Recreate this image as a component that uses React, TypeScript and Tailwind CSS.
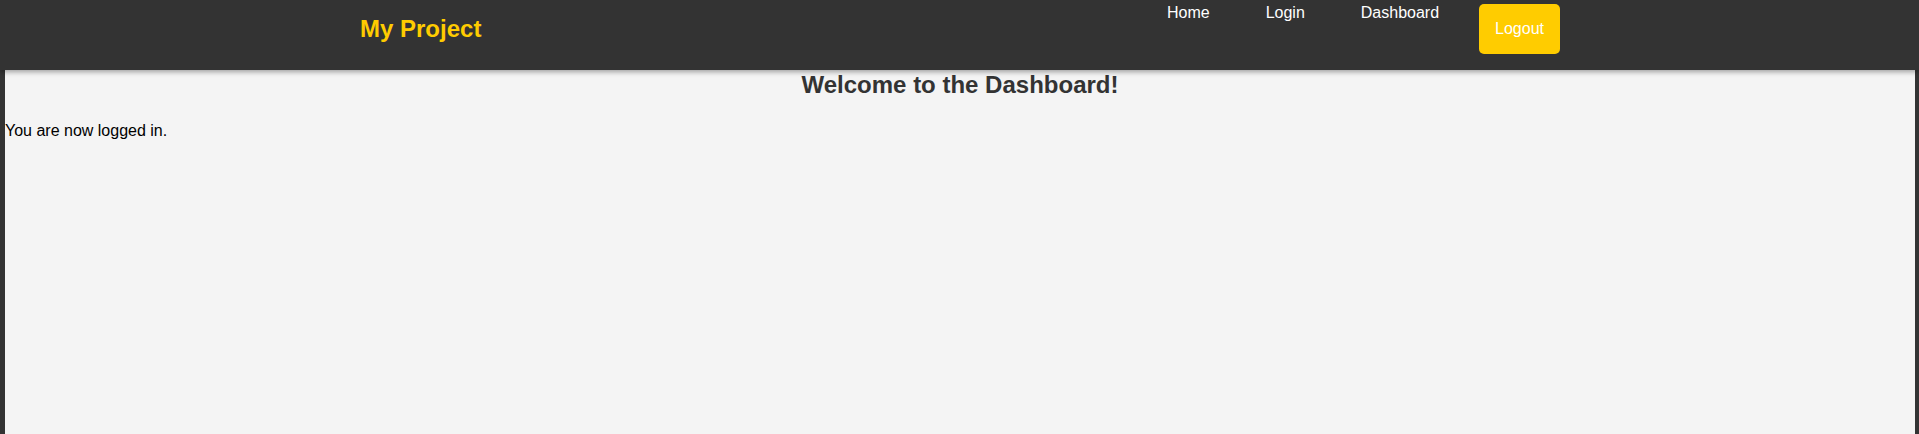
import React from "react";

export default function App() {
  return (
    <div
      className="min-h-[434px] bg-[#333333] flex flex-col"
      style={{ fontFamily: '"Liberation Sans", Arial, sans-serif' }}
    >
      <header className="relative z-10 h-[70px] bg-[#333333] shadow-[0_2px_5px_rgba(0,0,0,0.35)] flex items-start justify-between pl-[360px] pr-[359px]">
        <div className="mt-[15px] text-[24px] leading-[normal] font-bold text-[#ffcc00]">
          My Project
        </div>
        <nav className="mt-[4px] flex items-start text-[16px] leading-[normal] text-white">
          <a className="block">Home</a>
          <a className="block ml-[56px]">Login</a>
          <a className="block ml-[56px]">Dashboard</a>
          <button className="ml-[40px] bg-[#ffcc00] text-white rounded-[5px] p-[16px] leading-[normal] text-[16px]">
            Logout
          </button>
        </nav>
      </header>
      <main className="flex-1 ml-[5px] mr-[4px] bg-[#f4f4f4]">
        <h2 className="mt-[1px] text-center text-[24px] leading-[normal] font-bold text-[#333333]">
          Welcome to the Dashboard!
        </h2>
        <p className="mt-[23px] text-[16px] leading-[normal] text-black">
          You are now logged in.
        </p>
      </main>
    </div>
  );
}
